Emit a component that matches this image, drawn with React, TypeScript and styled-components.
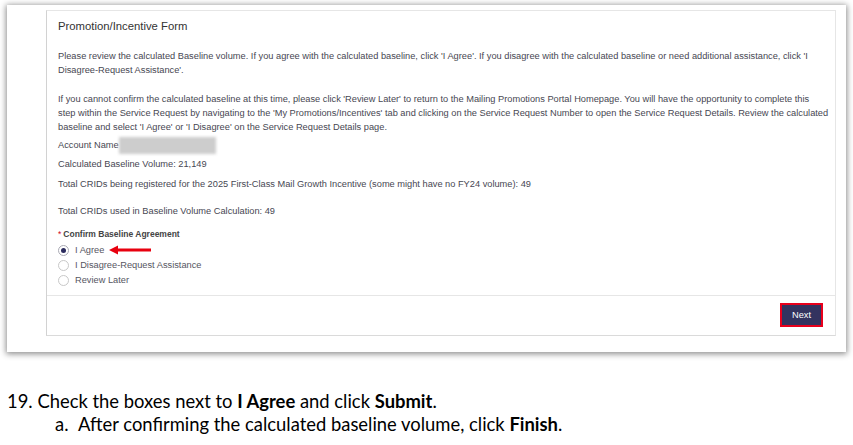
import React from 'react'
import styled, { createGlobalStyle } from 'styled-components'

const GlobalStyle = createGlobalStyle`
	html, body {
		margin: 0;
		padding: 0;
		background: #ffffff;
	}
	body {
		font-family: "Liberation Sans", Arial, sans-serif;
	}
`

const Page = styled.div`
	width: 853px;
	height: 445px;
	overflow: hidden;
	background: #fff;
`

const Shot = styled.div`
	margin: 5px 0 0 7px;
	width: 839px;
	height: 347px;
	box-sizing: border-box;
	padding: 5px 10px 0 39px;
	background: #fff;
	box-shadow: 0 1px 6px 1px rgba(0, 0, 0, 0.45);
`

const Card = styled.div`
	height: 326px;
	box-sizing: border-box;
	border: 1px solid #e6e6e6;
	border-left-color: #d2d2d2;
	border-bottom-color: #dadada;
	display: flex;
	flex-direction: column;
`

const Title = styled.div`
	padding: 8px 11px 0;
	font-size: 11.3px;
	line-height: 14px;
	color: #333;
`

const Body = styled.div`
	flex: 1;
	padding: 0 8px 0 11px;
	color: #474752;
	font-size: 9.25px;
	line-height: 14px;
`

const Line = styled.div<{ $top: number }>`
	margin-top: ${p => p.$top}px;
	white-space: nowrap;
`

const Para = styled.p<{ $top: number }>`
	margin: ${p => p.$top}px 0 0;
	white-space: nowrap;
`

const Blurred = styled.span`
	display: inline-block;
	vertical-align: middle;
	width: 97px;
	height: 17px;
	margin: -4px 0 -4px 0;
	background: #cdcdcd;
	filter: blur(1.5px);
`

const FieldLabel = styled.div`
	margin-top: 9px;
	font-size: 8.5px;
	font-weight: bold;
	color: #444;
	line-height: 14px;
`

const Req = styled.span`
	color: #d0021b;
	font-weight: normal;
	margin-right: 2px;
`

const RadioRow = styled.label<{ $top: number }>`
	display: flex;
	align-items: center;
	height: 14px;
	margin-top: ${p => p.$top}px;
	color: #56565f;
`

const Radio = styled.span<{ $checked?: boolean }>`
	width: 11px;
	height: 11px;
	box-sizing: border-box;
	border-radius: 50%;
	border: 1px solid ${p => (p.$checked ? '#a9a9b3' : '#c8c8c8')};
	margin-right: 6px;
	display: flex;
	align-items: center;
	justify-content: center;
	&::after {
		content: '';
		width: 5px;
		height: 5px;
		border-radius: 50%;
		background: ${p => (p.$checked ? '#2c2c5e' : 'transparent')};
	}
`

const Arrow = styled.svg`
	margin-left: 5px;
	flex: none;
`

const Footer = styled.div`
	border-top: 1px solid #e6e6e6;
	height: 40px;
	box-sizing: border-box;
	padding: 7px 12px 0 0;
	display: flex;
	justify-content: flex-end;
	align-items: flex-start;
`

const NextButton = styled.button`
	width: 43px;
	height: 24px;
	box-sizing: border-box;
	border: 2px solid #e8001c;
	background: #33335f;
	color: #fff;
	font-family: "Liberation Sans", Arial, sans-serif;
	font-size: 9.25px;
	padding: 0;
	cursor: pointer;
`

const Notes = styled.div`
	margin-top: 38px;
	font-family: Lato, "Open Sans", sans-serif;
	font-size: 18.4px;
	line-height: 23px;
	color: #000;
`

const Step = styled.div`
	padding-left: 7px;
`

const SubStep = styled.div`
	display: flex;
	padding-left: 55px;
`

const Marker = styled.span`
	width: 23px;
`

const App: React.FC = () => {
	return (
		<Page>
			<GlobalStyle />
			<Shot>
				<Card>
					<Title>Promotion/Incentive Form</Title>
					<Body>
						<Para $top={16}>
							Please review the calculated Baseline volume. If you agree with the calculated baseline, click 'I Agree'. If you disagree with the calculated baseline or need additional assistance, click 'I<br />
							Disagree-Request Assistance'.
						</Para>
						<Para $top={15}>
							If you cannot confirm the calculated baseline at this time, please click 'Review Later' to return to the Mailing Promotions Portal Homepage. You will have the opportunity to complete this<br />
							step within the Service Request by navigating to the 'My Promotions/Incentives' tab and clicking on the Service Request Number to open the Service Request Details. Review the calculated<br />
							baseline and select 'I Agree' or 'I Disagree' on the Service Request Details page.
						</Para>
						<Line $top={4}>Account Name<Blurred /></Line>
						<Line $top={5}>Calculated Baseline Volume: 21,149</Line>
						<Line $top={6}>Total CRIDs being registered for the 2025 First-Class Mail Growth Incentive (some might have no FY24 volume): 49</Line>
						<Line $top={13}>Total CRIDs used in Baseline Volume Calculation: 49</Line>
						<FieldLabel><Req>*</Req>Confirm Baseline Agreement</FieldLabel>
						<RadioRow $top={2}>
							<Radio $checked />
							I Agree
							<Arrow width="42" height="10" viewBox="0 0 42 10">
								<path d="M0 5 L9 0.5 L9 3.6 L42 3.6 L42 6.4 L9 6.4 L9 9.5 Z" fill="#e8000f" />
							</Arrow>
						</RadioRow>
						<RadioRow $top={1}>
							<Radio />
							I Disagree-Request Assistance
						</RadioRow>
						<RadioRow $top={1}>
							<Radio />
							Review Later
						</RadioRow>
					</Body>
					<Footer>
						<NextButton>Next</NextButton>
					</Footer>
				</Card>
			</Shot>
			<Notes>
				<Step>19. Check the boxes next to <b>I Agree</b> and click <b>Submit</b>.</Step>
				<SubStep>
					<Marker>a.</Marker>
					<span>After confirming the calculated baseline volume, click <b>Finish</b>.</span>
				</SubStep>
			</Notes>
		</Page>
	)
}

export default App
